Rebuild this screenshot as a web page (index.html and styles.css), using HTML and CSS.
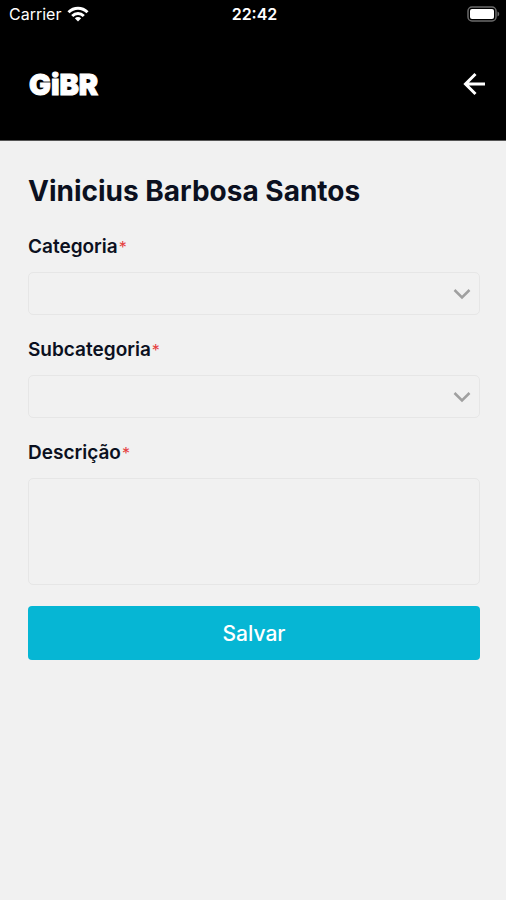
FILE: index.html
```html
<!DOCTYPE html>
<html lang="pt-BR">
    <head>
        <meta charset="UTF-8" />
        <meta name="viewport" content="width=device-width, initial-scale=1.0" />
        <title>GiBR</title>
        <link rel="stylesheet" href="styles.css">
    </head>
    <body>
        <div class="status-bar">
            <div class="carrier">
                <span>Carrier</span>
                <svg width="22" height="16" viewBox="0 0 22 16" fill="none" stroke="#ffffff" stroke-width="3">
                    <path d="M1.5 6.2C7 .8 15 .8 20.5 6.2" />
                    <path d="M5.2 10C8.6 6.7 13.4 6.7 16.8 10" />
                    <path d="M11 15.5L7.8 12.3C9.6 10.7 12.4 10.7 14.2 12.3Z" fill="#ffffff" stroke="none" />
                </svg>
            </div>
            <span class="time">22:42</span>
            <div class="battery">
                <svg width="33" height="16" viewBox="0 0 33 16">
                    <rect x="1" y="1" width="28" height="14" rx="4" fill="none" stroke="#6b6b6b" stroke-width="1.5" />
                    <rect x="3" y="3" width="24" height="10" rx="2" fill="#ffffff" />
                    <path d="M30.5 5.5C32.8 6.5 32.8 9.5 30.5 10.5Z" fill="#6b6b6b" />
                </svg>
            </div>
        </div>
        <header class="header">
            <span class="logo">GiBR</span>
            <button type="button" class="back" aria-label="Voltar">
                <svg width="24" height="24" viewBox="0 0 24 24" fill="none" stroke="#ffffff" stroke-width="3">
                    <path d="M23 12H4M13.5 2L3.5 12L13.5 22" />
                </svg>
            </button>
        </header>
        <main>
            <h1>Vinicius Barbosa Santos</h1>
            <form class="form">
                <div class="field">
                    <label for="categoria">Categoria<span class="required">*</span></label>
                    <div class="select-box">
                        <select id="categoria" required>
                            <option value=""></option>
                        </select>
                        <svg class="chevron" width="18" height="12" viewBox="0 0 18 12" fill="none" stroke="#a0a0a0" stroke-width="2.5">
                            <path d="M1.5 2L9 9.5L16.5 2" />
                        </svg>
                    </div>
                </div>
                <div class="field">
                    <label for="subcategoria">Subcategoria<span class="required">*</span></label>
                    <div class="select-box">
                        <select id="subcategoria" required>
                            <option value=""></option>
                        </select>
                        <svg class="chevron" width="18" height="12" viewBox="0 0 18 12" fill="none" stroke="#a0a0a0" stroke-width="2.5">
                            <path d="M1.5 2L9 9.5L16.5 2" />
                        </svg>
                    </div>
                </div>
                <div class="field">
                    <label for="descricao">Descrição<span class="required">*</span></label>
                    <textarea id="descricao" required></textarea>
                </div>
                <button type="submit" class="save">Salvar</button>
            </form>
        </main>
    </body>
</html>
```
FILE: styles.css
```css
* {
    box-sizing: border-box;
}

body {
    margin: 0;
    font-family: Inter, "Liberation Sans", sans-serif;
    background-color: #f1f1f1;
    color: #0b1020;
}

.status-bar {
    display: grid;
    grid-template-columns: 1fr auto 1fr;
    align-items: center;
    height: 28px;
    padding: 0 6px 0 9px;
    background-color: #000000;
    color: #ffffff;
    font-size: 16px;
}

.carrier {
    display: flex;
    align-items: center;
    gap: 6px;
}

.time {
    font-weight: 600;
}

.battery {
    display: flex;
    justify-content: flex-end;
}

.header {
    display: flex;
    justify-content: space-between;
    align-items: center;
    height: 113px;
    padding: 0 20px 0 29px;
    background-color: #000000;
    border-bottom: 1px solid #555555;
    color: #ffffff;
}

.logo {
    font-size: 29px;
    font-weight: 900;
    -webkit-text-stroke: 1px #ffffff;
}

.back {
    display: flex;
    padding: 0;
    border: none;
    background: none;
}

main {
    padding: 32px 26px 32px 28px;
}

h1 {
    margin: 0 0 24px;
    font-size: 28px;
    line-height: 36px;
    font-weight: 700;
}

.form {
    display: flex;
    flex-direction: column;
    gap: 21px;
}

.field {
    display: flex;
    flex-direction: column;
    gap: 11px;
}

label {
    font-size: 19px;
    line-height: 28px;
    font-weight: 600;
}

.required {
    margin-left: 1px;
    color: #e53e3e;
    font-size: 16px;
    font-weight: 400;
}

.select-box {
    display: grid;
    align-items: center;
}

.select-box > * {
    grid-area: 1 / 1;
}

.chevron {
    justify-self: end;
    margin-right: 9px;
    pointer-events: none;
}

select,
textarea {
    width: 100%;
    padding: 8px 12px;
    border: 1px solid #e6e6e6;
    border-radius: 5px;
    background-color: transparent;
    color: inherit;
    font: inherit;
}

select {
    height: 43px;
    appearance: none;
}

textarea {
    display: block;
    height: 107px;
    resize: none;
}

.save {
    height: 54px;
    border: none;
    border-radius: 4px;
    background-color: #06b6d4;
    color: #ffffff;
    font-family: inherit;
    font-size: 21px;
    font-weight: 500;
}
```
